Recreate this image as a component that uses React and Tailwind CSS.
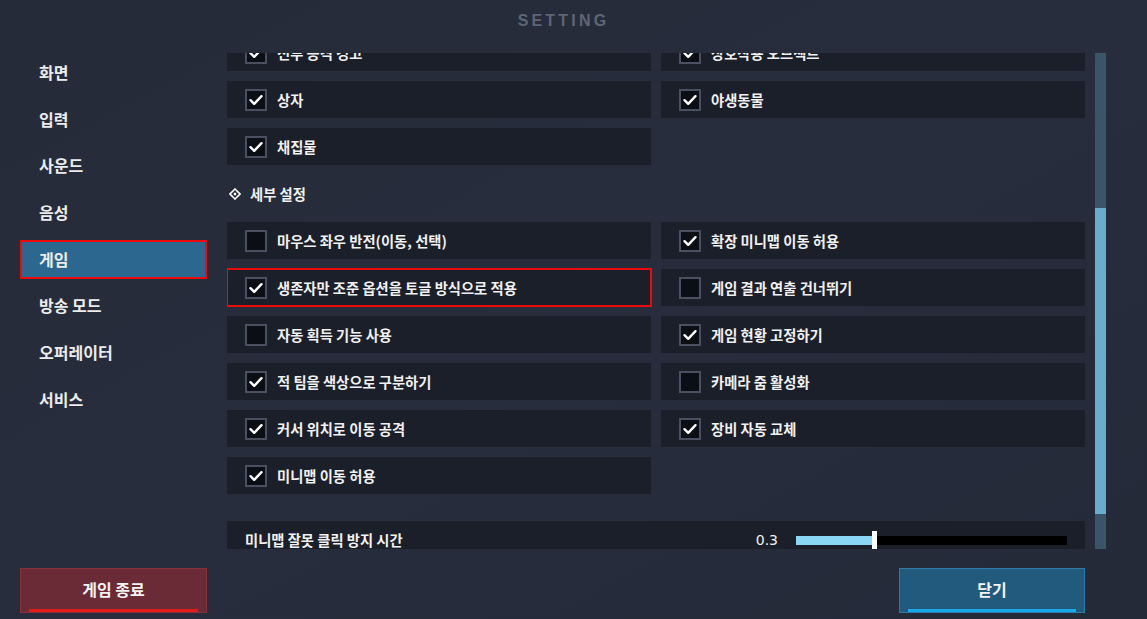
import React from 'react';

const menu = ['화면', '입력', '사운드', '음성', '게임', '방송 모드', '오퍼레이터', '서비스'];

const topRows = [
  ['전투 공격 경고', true, '상호작용 오브젝트', true],
  ['상자', true, '야생동물', true],
  ['채집물', true, null, false],
];

const detailRows = [
  ['마우스 좌우 반전(이동, 선택)', false, '확장 미니맵 이동 허용', true],
  ['생존자만 조준 옵션을 토글 방식으로 적용', true, '게임 결과 연출 건너뛰기', false],
  ['자동 획득 기능 사용', false, '게임 현황 고정하기', true],
  ['적 팀을 색상으로 구분하기', true, '카메라 줌 활성화', false],
  ['커서 위치로 이동 공격', true, '장비 자동 교체', true],
  ['미니맵 이동 허용', true, null, false],
];

function Check({ on }) {
  return (
    <div className="w-[22px] h-[22px] shrink-0 border-2 border-[#4a5062] bg-[#0b0e15] flex items-center justify-center">
      {on && (
        <svg width="16" height="16" viewBox="0 0 16 16">
          <polyline points="2.5,8.2 6.2,11.8 13.5,4.2" fill="none" stroke="#ffffff" strokeWidth="2.4" strokeLinecap="round" strokeLinejoin="round" />
        </svg>
      )}
    </div>
  );
}

function Row({ label, on, marked }) {
  if (!label) return <div />;
  return (
    <div className={`h-[37px] bg-[#1b1f2a] flex items-center pl-[18px] gap-[10px] ${marked ? 'outline-2 outline-[#ee0a0a] -outline-offset-1' : ''}`}>
      <Check on={on} />
      <span className="text-[14.3px] font-bold text-[#f1f1f1]">{label}</span>
    </div>
  );
}

export default function App() {
  return (
    <div
      className="w-[1147px] h-[619px] overflow-hidden flex flex-col bg-gradient-to-br from-[#262b39] via-[#272d3c] to-[#242a38]"
      style={{ fontFamily: '"Noto Sans CJK KR", "Noto Sans", sans-serif' }}
    >
      {/* title */}
      <div className="h-[53px] flex justify-center pt-[9px] pr-[20px]">
        <span className="text-[16px] tracking-[0.2em] text-[#5e6575] font-bold" style={{ fontFamily: '"Liberation Sans", sans-serif' }}>
          SETTING
        </span>
      </div>

      <div className="flex h-[496px]">
        {/* sidebar */}
        <div className="ml-[20px] w-[187px] flex flex-col gap-[7.7px]">
          {menu.map((m) => (
            <div
              key={m}
              className={`h-[39px] flex items-center pb-[1px] text-[16px] font-bold text-[#ececec] ${m === '게임' ? 'pl-[17px] bg-[#2c6790] border-2 border-[#ee0a0a]' : 'pl-[19px]'}`}
            >
              {m}
            </div>
          ))}
        </div>

        {/* content */}
        <div className="ml-[20px] w-[858px] overflow-hidden">
          <div className="-mt-[19px] grid grid-cols-2 gap-[10px]">
            {topRows.map((r, i) => (
              <React.Fragment key={i}>
                <Row label={r[0]} on={r[1]} />
                <Row label={r[2]} on={r[3]} />
              </React.Fragment>
            ))}
            <div className="col-span-2 h-[37px] flex items-center pl-[2px] gap-[9px]">
              <svg width="12" height="12" viewBox="0 0 12 12">
                <path d="M6 1 L11 6 L6 11 L1 6 Z" fill="none" stroke="#ffffff" strokeWidth="1.6" />
                <path d="M6 4.3 L7.7 6 L6 7.7 L4.3 6 Z" fill="#ffffff" />
              </svg>
              <span className="text-[14.3px] font-bold text-[#f1f1f1]">세부 설정</span>
            </div>
            {detailRows.map((r, i) => (
              <React.Fragment key={i}>
                <Row label={r[0]} on={r[1]} marked={i === 1} />
                <Row label={r[2]} on={r[3]} />
              </React.Fragment>
            ))}
            <div className="col-span-2 h-[7px]" />
            <div className="col-span-2 h-[38px] bg-[#1b1f2a] flex items-center pl-[18px] pr-[18px]">
              <span className="text-[14.3px] font-bold text-[#f1f1f1]">미니맵 잘못 클릭 방지 시간</span>
              <span className="ml-auto text-[14px] text-[#f1f1f1]" style={{ fontFamily: '"DejaVu Sans", sans-serif' }}>0.3</span>
              <div className="ml-[18px] w-[271px] flex items-center">
                <div className="w-[76px] h-[9px] bg-[#8ad6f5]" />
                <div className="w-[5px] h-[19px] bg-white" />
                <div className="flex-1 h-[9px] bg-black" />
              </div>
            </div>
          </div>
        </div>

        {/* scrollbar */}
        <div className="ml-[10px] w-[11px] bg-[#3b5467] flex flex-col">
          <div className="h-[155px]" />
          <div className="h-[306px] bg-[#69adcc]" />
        </div>
      </div>

      {/* bottom buttons */}
      <div className="mt-[19px] flex">
        <div className="ml-[20px] w-[187px] h-[45px] bg-[#6a2a36] border border-[#86303a] flex flex-col">
          <div className="flex-1 flex items-center justify-center text-[16px] font-bold text-[#f4f4f4]">게임 종료</div>
          <div className="mx-[8px] h-[3px] bg-[#e21b1b]" />
        </div>
        <div className="ml-[692px] w-[186px] h-[45px] bg-[#225a7d] border border-[#2d7aa8] flex flex-col">
          <div className="flex-1 flex items-center justify-center text-[16px] font-bold text-[#f4f4f4]">닫기</div>
          <div className="mx-[8px] h-[3px] bg-[#17a9e8]" />
        </div>
      </div>
    </div>
  );
}
